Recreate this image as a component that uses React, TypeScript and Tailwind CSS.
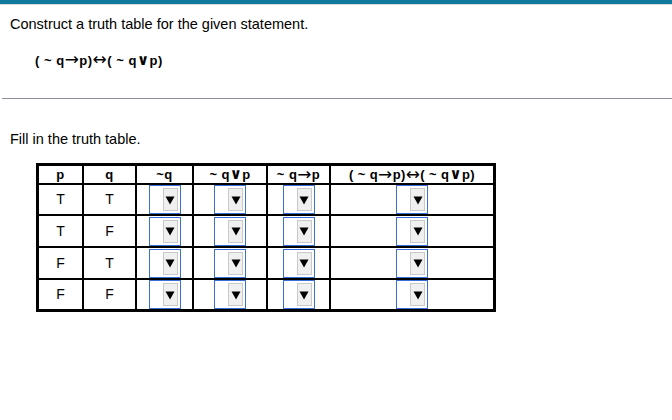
import { Fragment } from 'react'

const COLS = ['43px', '51px', '55px', '72px', '61px', '162px']

const ROWS = [
  ['T', 'T'],
  ['T', 'F'],
  ['F', 'T'],
  ['F', 'F'],
]

// arrows and the "or" sign look too small in Liberation Sans, so draw them with DejaVu
function Formula({ text }: { text: string }) {
  return (
    <>
      {text.split('').map((ch, i) => {
        if (ch === '→' || ch === '↔')
          return (
            <span key={i} className="text-[1.3em] font-normal leading-none" style={{ fontFamily: '"DejaVu Sans", sans-serif' }}>
              {ch}
            </span>
          )
        if (ch === '∨')
          return (
            <span key={i} className="text-[1.15em] leading-none" style={{ fontFamily: '"DejaVu Sans", sans-serif' }}>
              {ch}
            </span>
          )
        return <Fragment key={i}>{ch}</Fragment>
      })}
    </>
  )
}

function Dropdown() {
  return (
    <div className="flex h-[29px] w-[32px] items-center justify-end border border-[#3c6fd6] bg-white pr-[2px]">
      <div className="flex h-[23px] w-[15px] items-center justify-center border border-[#c9c9c9] bg-[#f0f0f0]">
        <svg width="10" height="10" viewBox="0 0 10 10">
          <path d="M0.5 1.5 H9.5 L5 9.5 Z" fill="#000" />
        </svg>
      </div>
    </div>
  )
}

export default function App() {
  const headers = ['p', 'q', '~q', '~ q∨p', '~ q→p', '( ~ q→p)↔( ~ q∨p)']

  return (
    <div className="h-[420px] w-[672px] bg-white text-black" style={{ fontFamily: '"Liberation Sans", Arial, sans-serif' }}>
      {/* top strip */}
      <div className="h-[4px] bg-[#10789a]" />
      <div className="h-px bg-[#d6dde2]" />

      <p className="ml-[10px] mt-[11px] text-[14.5px] leading-[17px]">Construct a truth table for the given statement.</p>
      <p className="ml-[35px] mt-[18px] h-[16px] text-[13px] font-bold leading-[16px] tracking-[0.5px]">
        <Formula text="( ~ q→p)↔( ~ q∨p)" />
      </p>

      <div className="ml-[2px] mt-[31px] h-px bg-[#8c909c]" />

      <p className="ml-[10px] mt-[32px] text-[14.5px] leading-[17px]">Fill in the truth table.</p>

      {/* truth table */}
      <div
        className="ml-[36px] mt-[15px] grid w-fit gap-[2px] border-[3px] border-black bg-black"
        style={{ gridTemplateColumns: COLS.join(' '), gridTemplateRows: '17px 29px 30px 30px 29px' }}
      >
        {headers.map((h) => (
          <div key={h} className="flex items-center justify-center bg-white text-[13px] font-bold leading-none tracking-[0.4px]">
            <Formula text={h} />
          </div>
        ))}
        {ROWS.map(([p, q], i) => (
          <Fragment key={i}>
            <div className="flex items-center justify-center bg-white text-[14px]">{p}</div>
            <div className="flex items-center justify-center bg-white text-[14px]">{q}</div>
            {[0, 1, 2, 3].map((c) => (
              <div key={c} className="flex items-center justify-center bg-white">
                <Dropdown />
              </div>
            ))}
          </Fragment>
        ))}
      </div>
    </div>
  )
}
